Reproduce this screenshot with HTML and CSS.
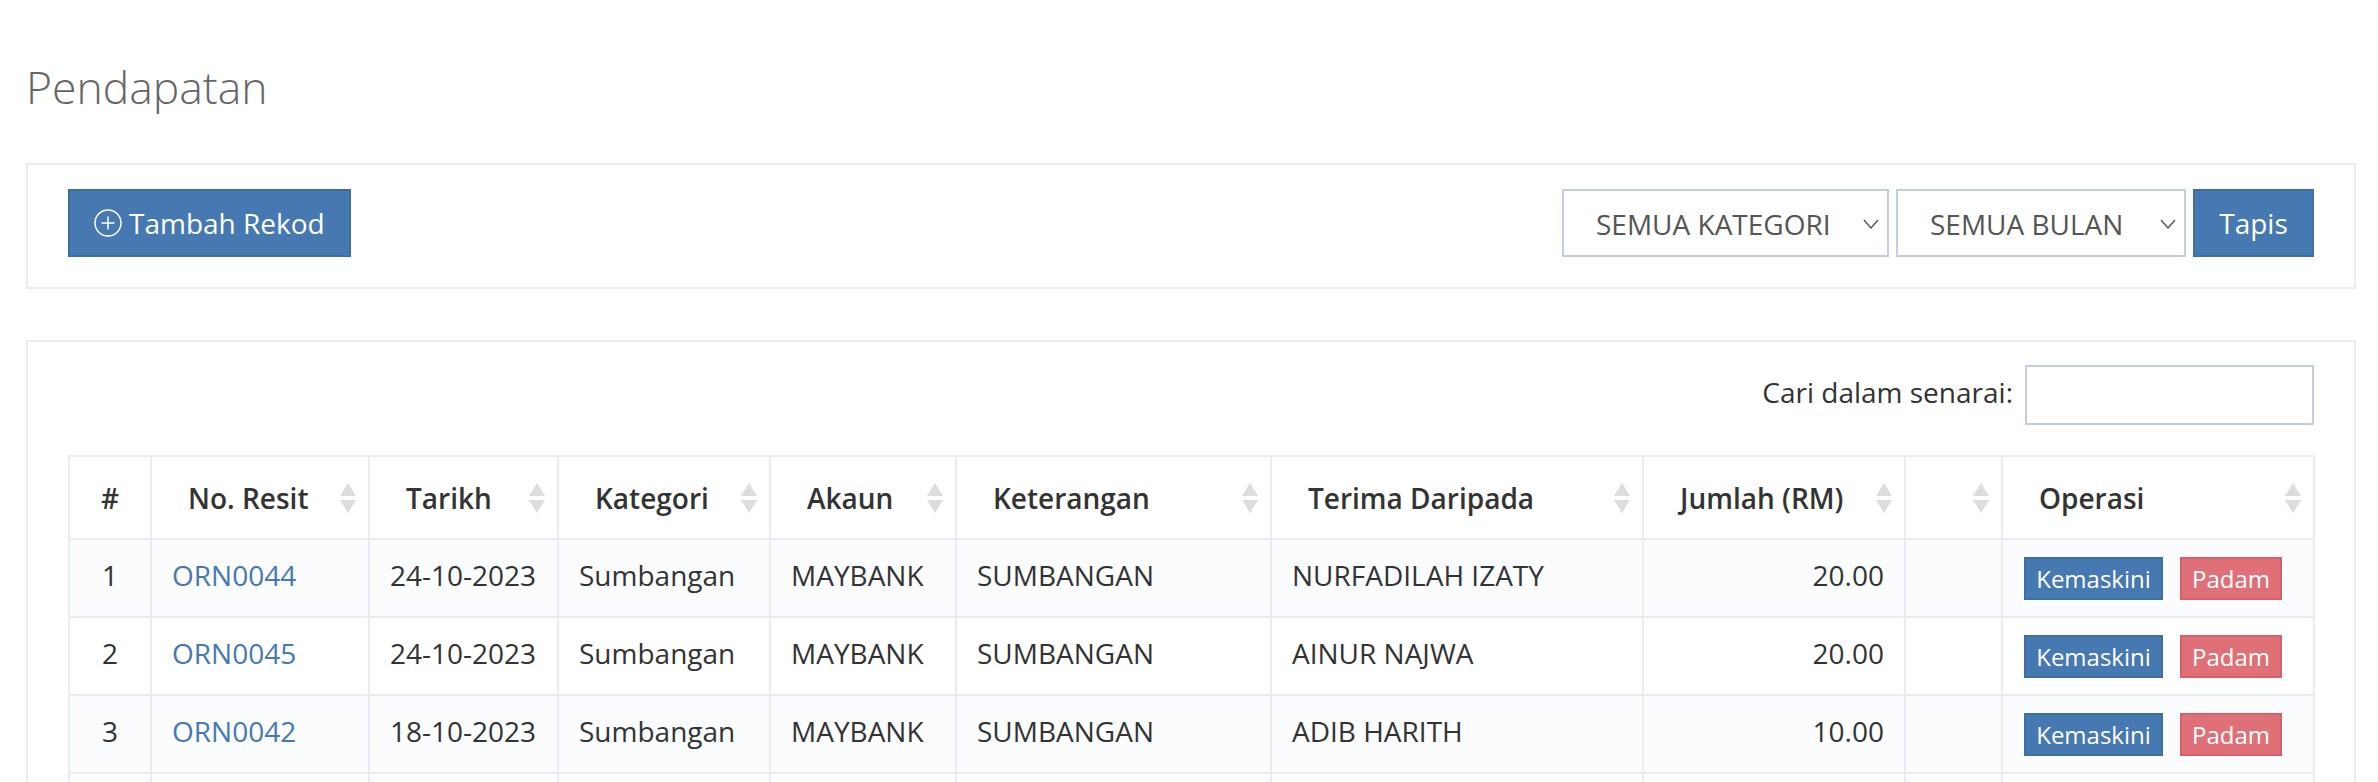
FILE: index.html
```html
<!DOCTYPE html>
<html lang="ms">
<head>
  <meta charset="UTF-8">
  <title>Pendapatan</title>
  <link rel="stylesheet" href="styles.css">
</head>
<body>
  <h1 class="page-title">Pendapatan</h1>

  <div class="panel toolbar">
    <button class="btn btn-add">
      <svg class="plus-icon" viewBox="0 0 28 28" fill="none" stroke="currentColor" stroke-width="1.5">
        <circle cx="14" cy="14" r="13"/>
        <path d="M14 7.5v13M7.5 14h13"/>
      </svg>
      Tambah Rekod
    </button>
    <form class="filters">
      <div class="select select-cat">SEMUA KATEGORI
        <svg class="chevron" viewBox="0 0 16 10" fill="none" stroke="#555" stroke-width="1.4"><path d="M1 1l7 8 7-8"/></svg>
      </div>
      <div class="select select-month">SEMUA BULAN
        <svg class="chevron" viewBox="0 0 16 10" fill="none" stroke="#555" stroke-width="1.4"><path d="M1 1l7 8 7-8"/></svg>
      </div>
      <button type="button" class="btn btn-filter">Tapis</button>
    </form>
  </div>

  <div class="panel list-panel">
    <div class="search-row">
      <label for="search">Cari dalam senarai:</label>
      <input type="text" id="search">
    </div>

    <table class="records">
      <colgroup>
        <col class="c-no"><col class="c-resit"><col class="c-date"><col class="c-cat"><col class="c-acc">
        <col class="c-desc"><col class="c-from"><col class="c-amt"><col class="c-blank"><col class="c-ops">
      </colgroup>
      <thead>
        <tr>
          <th class="center">#</th>
          <th><div class="th-inner">No. Resit <svg class="sort" viewBox="0 0 16 30"><path d="M8 0l8 13H0z"/><path d="M8 30L0 17h16z"/></svg></div></th>
          <th><div class="th-inner">Tarikh <svg class="sort" viewBox="0 0 16 30"><path d="M8 0l8 13H0z"/><path d="M8 30L0 17h16z"/></svg></div></th>
          <th><div class="th-inner">Kategori <svg class="sort" viewBox="0 0 16 30"><path d="M8 0l8 13H0z"/><path d="M8 30L0 17h16z"/></svg></div></th>
          <th><div class="th-inner">Akaun <svg class="sort" viewBox="0 0 16 30"><path d="M8 0l8 13H0z"/><path d="M8 30L0 17h16z"/></svg></div></th>
          <th><div class="th-inner">Keterangan <svg class="sort" viewBox="0 0 16 30"><path d="M8 0l8 13H0z"/><path d="M8 30L0 17h16z"/></svg></div></th>
          <th><div class="th-inner">Terima Daripada <svg class="sort" viewBox="0 0 16 30"><path d="M8 0l8 13H0z"/><path d="M8 30L0 17h16z"/></svg></div></th>
          <th><div class="th-inner">Jumlah (RM) <svg class="sort" viewBox="0 0 16 30"><path d="M8 0l8 13H0z"/><path d="M8 30L0 17h16z"/></svg></div></th>
          <th><div class="th-inner"><span></span><svg class="sort" viewBox="0 0 16 30"><path d="M8 0l8 13H0z"/><path d="M8 30L0 17h16z"/></svg></div></th>
          <th><div class="th-inner">Operasi <svg class="sort" viewBox="0 0 16 30"><path d="M8 0l8 13H0z"/><path d="M8 30L0 17h16z"/></svg></div></th>
        </tr>
      </thead>
      <tbody>
        <tr>
          <td class="center">1</td>
          <td><a href="#">ORN0044</a></td>
          <td>24-10-2023</td>
          <td>Sumbangan</td>
          <td>MAYBANK</td>
          <td>SUMBANGAN</td>
          <td>NURFADILAH IZATY</td>
          <td class="right">20.00</td>
          <td></td>
          <td class="ops"><a class="btn-sm blue" href="#">Kemaskini</a><a class="btn-sm red" href="#">Padam</a></td>
        </tr>
        <tr>
          <td class="center">2</td>
          <td><a href="#">ORN0045</a></td>
          <td>24-10-2023</td>
          <td>Sumbangan</td>
          <td>MAYBANK</td>
          <td>SUMBANGAN</td>
          <td>AINUR NAJWA</td>
          <td class="right">20.00</td>
          <td></td>
          <td class="ops"><a class="btn-sm blue" href="#">Kemaskini</a><a class="btn-sm red" href="#">Padam</a></td>
        </tr>
        <tr>
          <td class="center">3</td>
          <td><a href="#">ORN0042</a></td>
          <td>18-10-2023</td>
          <td>Sumbangan</td>
          <td>MAYBANK</td>
          <td>SUMBANGAN</td>
          <td>ADIB HARITH</td>
          <td class="right">10.00</td>
          <td></td>
          <td class="ops"><a class="btn-sm blue" href="#">Kemaskini</a><a class="btn-sm red" href="#">Padam</a></td>
        </tr>
        <tr>
          <td></td><td></td><td></td><td></td><td></td><td></td><td></td><td></td><td></td><td></td>
        </tr>
      </tbody>
    </table>
  </div>
</body>
</html>
```

FILE: styles.css
```css
html, body {
  height: 782px;
  overflow: hidden;
}

body {
  margin: 0;
  padding: 0 22px 0 26px;
  font-family: "Open Sans", sans-serif;
  font-size: 28px;
  color: #333;
  background: #fff;
}

.page-title {
  margin: 0;
  padding-top: 57px;
  height: 163px;
  box-sizing: border-box;
  font-size: 44.5px;
  line-height: 60px;
  font-weight: 300;
  color: #666;
}

.panel {
  border: 2px solid #e9edf2;
  box-sizing: border-box;
}

.toolbar {
  height: 126px;
  padding: 24px 40px 0 40px;
  display: flex;
  justify-content: space-between;
  align-items: flex-start;
}

.btn {
  height: 68px;
  box-sizing: border-box;
  border: 2px solid #3f6ea3;
  background: #4678b2;
  color: #fff;
  font-family: inherit;
  font-size: 28px;
}

.btn-add {
  width: 283px;
  padding: 0 0 0 24px;
  display: flex;
  align-items: center;
  gap: 7px;
}

.plus-icon {
  width: 28px;
  height: 28px;
  flex: none;
}

.filters {
  display: flex;
  gap: 7px;
}

.select {
  height: 68px;
  box-sizing: border-box;
  border: 2px solid #c3cede;
  display: flex;
  align-items: center;
  justify-content: space-between;
  padding: 2px 8px 0 32px;
  color: #555;
}

.select-cat { width: 327px; }
.select-month { width: 290px; padding-left: 32px; }

.chevron {
  width: 16px;
  height: 10px;
}

.btn-filter {
  width: 121px;
  padding: 0;
}

.list-panel {
  margin-top: 51px;
  height: 600px;
  padding: 23px 40px 0 40px;
}

.search-row {
  display: flex;
  justify-content: flex-end;
  align-items: center;
  gap: 12px;
}

.search-row label {
  padding-bottom: 6px;
}

.search-row input {
  width: 289px;
  height: 60px;
  box-sizing: border-box;
  border: 2px solid #c3cede;
  background: #fff;
  margin: 0;
}

.records {
  margin-top: 30px;
  width: 2245px;
  table-layout: fixed;
  border-collapse: collapse;
  border: 2px solid #e9edf2;
}

.c-no { width: 82px; }
.c-resit { width: 218px; }
.c-date { width: 189px; }
.c-cat { width: 212px; }
.c-acc { width: 186px; }
.c-desc { width: 315px; }
.c-from { width: 372px; }
.c-amt { width: 262px; }
.c-blank { width: 97px; }
.c-ops { width: 312px; }

.records th, .records td {
  border: 2px solid #e9edf2;
  white-space: nowrap;
}

.records th {
  height: 81px;
  padding: 0 12px 0 36px;
  font-weight: 600;
  text-align: left;
}

.records th.center {
  padding: 0;
  text-align: center;
}

.th-inner {
  display: flex;
  justify-content: space-between;
  align-items: center;
}

.sort {
  width: 16px;
  height: 30px;
  fill: #ddd;
  flex: none;
}

.records td {
  height: 78px;
  box-sizing: border-box;
  padding: 0 20px 7px 20px;
}

.records td.center {
  padding: 0 0 7px;
  text-align: center;
}

.records td.right {
  text-align: right;
}

.records tbody tr:nth-child(odd) {
  background: #fbfcfe;
}

.records a {
  color: #4678b2;
  text-decoration: none;
}

.records td.ops {
  padding: 0 0 0 21px;
}

.btn-sm {
  display: inline-block;
  box-sizing: border-box;
  height: 43px;
  line-height: 39px;
  border: 2px solid;
  font-size: 24px;
  text-align: center;
  vertical-align: middle;
}

.records a.blue {
  width: 139px;
  margin-right: 17px;
  background: #4678b2;
  border-color: #3f6ea3;
  color: #fff;
}

.records a.red {
  width: 102px;
  background: #e07077;
  border-color: #d9606a;
  color: #fff;
}
```
